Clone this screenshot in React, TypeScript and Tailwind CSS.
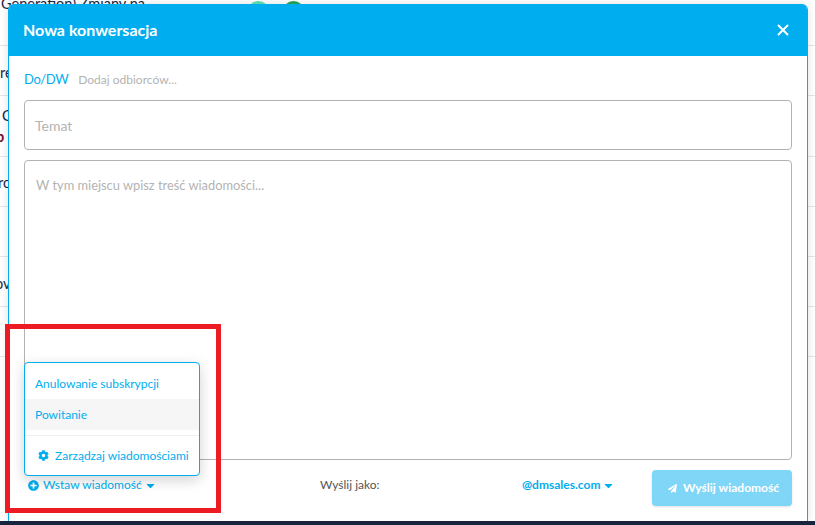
import { FaCaretDown, FaCog, FaPaperPlane, FaPlusCircle } from 'react-icons/fa';
import { X } from 'lucide-react';

const rows = ['h-[46px]', 'h-[50px]', 'h-[61px]', 'h-[50px]', 'h-[50px]', 'h-[50px]', 'h-[50px]'];

const App = () => {
  return (
    <div className="relative h-[525px] w-[815px] overflow-hidden bg-white font-['Lato',sans-serif]">
      {/* page behind the dialog */}
      <div className="flex h-[521px] flex-col">
        {rows.map((height, index) => (
          <div key={index} className={`${height} shrink-0 overflow-hidden border-b border-[#e6e6e6] text-[14.5px] leading-[21px] whitespace-nowrap text-[#1a2640]`}>
            {index === 0 && <p className="-mt-[7px] pl-[1px]">Generation) Zmiany na</p>}
            {index === 1 && <p className="pt-[16px]">re</p>}
            {index === 2 && (
              <div className="pt-[9px]">
                <p className="pl-[2px]">C</p>
                <p className="-ml-[4px] font-bold text-[#7a1030]">p i</p>
              </div>
            )}
            {index === 3 && <p className="-ml-[2px] pt-[15px]">ro</p>}
            {index === 5 && <p className="-ml-[5px] pt-[16px]">ov</p>}
          </div>
        ))}
      </div>
      <div className="absolute top-[1px] left-[248px] h-[22px] w-[21px] rounded-full bg-[#5fe3b0]" />
      <div className="absolute top-[1px] left-[283px] h-[22px] w-[21px] rounded-full bg-[#1fa855]" />
      <div className="absolute right-0 bottom-0 left-0 h-[4px] bg-[#1a2640]" />

      {/* dialog */}
      <div className="absolute top-[4px] left-[8px] flex h-[517px] w-[800px] flex-col overflow-hidden rounded-t-[6px] border-x border-[#00aeef] bg-white shadow-[0_0_10px_rgba(0,0,0,0.12)]">
        <div className="flex h-[52px] shrink-0 items-center justify-between bg-[#00aeef] pr-[15px] pl-[14px] text-white">
          <h2 className="text-[16px] font-bold">Nowa konwersacja</h2>
          <X size={18} strokeWidth={2.5} />
        </div>
        <div className="flex min-h-0 flex-1 flex-col px-[15px]">
          <div className="flex h-[44px] shrink-0 items-center gap-[10px] pt-[4px]">
            <span className="text-[13px] tracking-[-0.4px] text-[#00aeef]">Do/DW</span>
            <span className="text-[12px] text-[#b3b3b3]">Dodaj odbiorców...</span>
          </div>
          <div className="flex h-[50px] shrink-0 items-center rounded-[4px] border border-[#b3b3b3] px-[10px] text-[14px] text-[#b3b3b3]">
            Temat
          </div>
          <div className="mt-[10px] h-[300px] shrink-0 rounded-[4px] border border-[#b3b3b3] px-[11px] py-[15px] text-[12.85px] leading-[18px] text-[#b3b3b3]">
            W tym miejscu wpisz treść wiadomości...
          </div>
          <div className="flex h-[61px] shrink-0 items-start pt-[10px]">
            <div className="flex w-[296px] items-center gap-[4px] pt-[7px] pl-[4px] text-[12px] leading-[16px] text-[#00aeef]">
              <FaPlusCircle size={11} />
              <span>Wstaw wiadomość</span>
              <FaCaretDown size={13} className="-ml-[2px]" />
            </div>
            <span className="w-[202px] pt-[7px] text-[12px] leading-[16px] text-[#555]">Wyślij jako:</span>
            <div className="flex w-[130px] items-center gap-[4px] pt-[7px] text-[12px] leading-[16px] font-bold text-[#00aeef]">
              <span>@dmsales.com</span>
              <FaCaretDown size={13} className="-ml-[2px]" />
            </div>
            <button className="flex h-[36px] w-[140px] items-center justify-center gap-[6px] rounded-[4px] bg-[#80d6f7] pl-[3px] text-[12px] font-bold text-white shadow-sm">
              <FaPaperPlane size={9} />
              Wyślij wiadomość
            </button>
          </div>
        </div>
      </div>

      {/* dropdown */}
      <div className="absolute top-[362px] left-[24px] w-[176px] rounded-[4px] border border-[#00aeef] bg-white pt-[5px] text-[12px] text-[#00aeef] shadow-[0_4px_14px_rgba(0,0,0,0.18)]">
        <div className="flex h-[31px] items-center pl-[10px]">Anulowanie subskrypcji</div>
        <div className="flex h-[31px] items-center bg-[#f6f6f6] pl-[10px]">Powitanie</div>
        <div className="mt-[5px] flex h-[40px] items-center gap-[6px] border-t border-[#f0f0f0] pl-[13px]">
          <FaCog size={11} />
          Zarządzaj wiadomościami
        </div>
      </div>

      {/* red annotation box */}
      <div className="absolute top-[324px] left-[5px] h-[189px] w-[216px] border-[5px] border-[#ed1c24]" />
    </div>
  );
};

export default App;
